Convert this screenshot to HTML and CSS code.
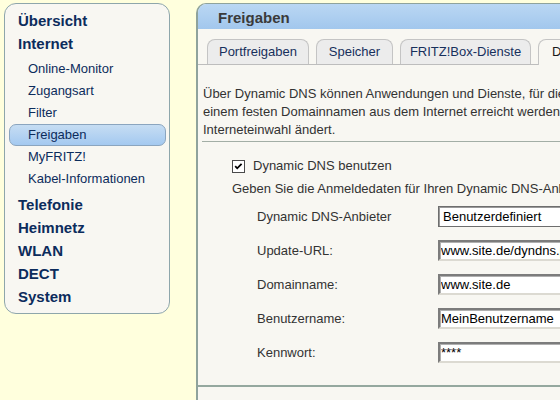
FILE: index.html
```html
<!DOCTYPE html>
<html lang="de">
<head>
<meta charset="utf-8">
<title>FRITZ!Box – Freigaben</title>
<link rel="stylesheet" href="styles.css">
</head>
<body>
<div class="page">
  <nav class="menu">
    <a class="top" href="#">Übersicht</a>
    <a class="top" href="#">Internet</a>
    <ul class="sub">
      <li><a href="#">Online-Monitor</a></li>
      <li><a href="#">Zugangsart</a></li>
      <li><a href="#">Filter</a></li>
      <li class="active"><a href="#">Freigaben</a></li>
      <li><a href="#">MyFRITZ!</a></li>
      <li><a href="#">Kabel-Informationen</a></li>
    </ul>
    <a class="top" href="#">Telefonie</a>
    <a class="top" href="#">Heimnetz</a>
    <a class="top" href="#">WLAN</a>
    <a class="top" href="#">DECT</a>
    <a class="top" href="#">System</a>
  </nav>

  <main class="panel">
    <div class="panel-head">Freigaben</div>
    <div class="tabs">
      <span class="tab tab-port">Portfreigaben</span>
      <span class="tab tab-store">Speicher</span>
      <span class="tab tab-svc">FRITZ!Box-Dienste</span>
      <span class="tab tab-dns active">Dynamic DNS</span>
    </div>

    <p class="intro">Über Dynamic DNS können Anwendungen und Dienste, für die in der FRITZ!Box-Firewall Portfreigaben eingerichtet wurden, unter<br>einem festen Domainnamen aus dem Internet erreicht werden, obwohl sich die öffentliche IP-Adresse der FRITZ!Box mit jeder<br>Interneteinwahl ändert.</p>
    <div class="sep"></div>

    <label class="check-row">
      <svg class="checkbox" width="13" height="13" viewBox="0 0 13 13" aria-hidden="true">
        <rect x="0.5" y="0.5" width="12" height="12" fill="#ffffff" stroke="#4a4a4a"/>
        <path d="M3.2 6.2 L5.2 8.3 L9.6 3.8" fill="none" stroke="#000000" stroke-width="1.8"/>
      </svg>
      <span>Dynamic DNS benutzen</span>
    </label>
    <p class="hint">Geben Sie die Anmeldedaten für Ihren Dynamic DNS-Anbieter an.</p>

    <div class="form">
      <span class="lbl">Dynamic DNS-Anbieter</span>
      <select class="field select"><option>Benutzerdefiniert</option></select>
      <span class="lbl">Update-URL:</span>
      <input class="field" type="text" value="www.site.de/dyndns.php?hostname=">
      <span class="lbl">Domainname:</span>
      <input class="field" type="text" value="www.site.de">
      <span class="lbl">Benutzername:</span>
      <input class="field" type="text" value="MeinBenutzername">
      <span class="lbl">Kennwort:</span>
      <input class="field" type="text" value="****">
    </div>

    <div class="panel-foot"></div>
  </main>
</div>
</body>
</html>
```

FILE: styles.css
```css
* {
  box-sizing: border-box;
}

html,
body {
  margin: 0;
  height: 100%;
}

body {
  background: #ffffdd;
  font-family: "Liberation Sans", Arial, sans-serif;
  overflow: hidden;
}

.page {
  display: flex;
  align-items: flex-start;
  gap: 26px;
  height: 100%;
  padding: 3px 0 0 4px;
}

/* ---------- navigation ---------- */
.menu {
  flex: 0 0 166px;
  display: flex;
  flex-direction: column;
  background: #f8f7f2;
  border: 1px solid #8ea6ab;
  border-radius: 12px;
  padding: 5px 0 5px;
}

.menu a {
  text-decoration: none;
  color: #0c2c5c;
}

.menu .top {
  display: block;
  padding-left: 13px;
  font-size: 15px;
  font-weight: bold;
  line-height: 23px;
}

.sub {
  list-style: none;
  margin: 3px 0 3px;
  padding: 0;
}

.sub li {
  margin: 0 3px 0 4px;
  border: 1px solid transparent;
  border-radius: 7px;
  line-height: 20px;
  font-size: 13px;
}

.sub li a {
  display: block;
  padding-left: 18px;
}

.sub li.active {
  background: linear-gradient(#c6ddf3, #a4c9f0);
  border-color: #8ba5bf;
}

/* ---------- main panel ---------- */
.panel {
  flex: 0 0 520px;
  align-self: stretch;
  background: #f8f7f2;
  border-top: 1px solid #8fa39c;
  border-left: 2px solid #8fa39c;
  border-top-left-radius: 10px;
  overflow: hidden;
}

.panel-head {
  height: 25px;
  padding: 2px 0 0 20px;
  background: linear-gradient(#bad7f3, #a2c7ed);
  font-size: 15px;
  font-weight: bold;
  line-height: 23px;
  color: #3a3a3a;
}

.tabs {
  display: flex;
  gap: 7px;
  padding: 10px 0 0 9px;
  border-bottom: 1px solid #bdbdbd;
}

.tab {
  flex: 0 0 auto;
  height: 25px;
  padding: 0;
  background: #ececec;
  border: 1px solid #c4c4c4;
  border-bottom: none;
  border-radius: 8px 8px 0 0;
  font-size: 13px;
  line-height: 24px;
  text-align: center;
  color: #17305c;
  white-space: nowrap;
}

.tab-port {
  width: 102px;
}

.tab-store {
  width: 77px;
}

.tab-svc {
  width: 131px;
}

.tab-dns {
  width: 100px;
  padding-left: 13px;
  text-align: left;
}

.tab.active {
  height: 26px;
  margin-bottom: -1px;
  background: #f8f7f2;
  color: #1a1a1a;
}

.intro {
  margin: 20px 0 0;
  padding-left: 5px;
  font-size: 13px;
  line-height: 18px;
  color: #333333;
  white-space: nowrap;
}

.sep {
  margin: 2px 0 0 4px;
  border-top: 1px solid #a3aea6;
}

.check-row {
  display: flex;
  align-items: center;
  gap: 8px;
  margin-top: 15px;
  padding-left: 34px;
  font-size: 13px;
  line-height: 18px;
  color: #333333;
}

.checkbox {
  flex: 0 0 13px;
}

.hint {
  margin: 5px 0 0;
  padding-left: 34px;
  font-size: 13px;
  line-height: 18px;
  color: #333333;
  white-space: nowrap;
}

.form {
  display: grid;
  grid-template-columns: 181px 260px;
  row-gap: 13px;
  align-items: center;
  margin-top: 8px;
  padding-left: 59px;
}

.lbl {
  font-size: 13px;
  line-height: 18px;
  color: #333333;
}

.field {
  width: 260px;
  height: 21px;
  margin: 0;
  padding: 0 1px;
  background: #ffffff;
  border-style: solid;
  border-width: 2px;
  border-color: #7c7c7c #dcdad2 #dcdad2 #7c7c7c;
  box-shadow: inset 1px 1px 0 #b0b0b0;
  border-radius: 0;
  font-family: "Liberation Sans", Arial, sans-serif;
  font-size: 13px;
  color: #000000;
  outline: none;
}

.select {
  appearance: none;
  -webkit-appearance: none;
  padding-left: 4px;
  border: 1px solid #6e6e6e;
  box-shadow: inset 1px 1px 0 #9a9a9a;
}

.panel-foot {
  margin-top: 22px;
  border-top: 2px solid #95a89f;
}
```
